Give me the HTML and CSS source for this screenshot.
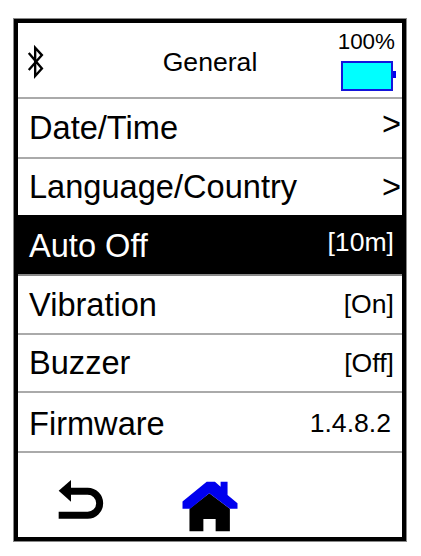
FILE: index.html
```html
<!DOCTYPE html>
<html lang="en">
<head>
    <meta charset="UTF-8">
    <meta name="viewport" content="width=device-width, initial-scale=1.0">
    <title>General</title>
    <link rel="stylesheet" href="styles.css">
</head>
<body>

    <div class="screen">
        <div class="status-bar">
            <svg class="bt-icon" viewBox="80 135 56 104" width="19" height="35">
                <path d="M88 162 L127 208 L107 230 L107 146 L127 168 L88 212" fill="none" stroke="#000" stroke-width="7"/>
            </svg>
            <div class="status-title">General</div>
            <div class="battery">
                <span class="battery-text">100%</span>
                <div class="battery-icon"><div class="battery-fill"></div></div>
            </div>
        </div>

        <div class="menu-row row-tall"><span>Date/Time</span><span class="chevron chevron-raised">&gt;</span></div>
        <div class="menu-row row-short before-selected"><span>Language/Country</span><span class="chevron">&gt;</span></div>
        <div class="menu-row selected"><span>Auto Off</span><span class="value value-raised">[10m]</span></div>
        <div class="menu-row"><span>Vibration</span><span class="value">[On]</span></div>
        <div class="menu-row row-short"><span>Buzzer</span><span class="value">[Off]</span></div>
        <div class="menu-row row-tall row-last"><span>Firmware</span><span class="value version">1.4.8.2</span></div>

        <div class="toolbar">
            <svg class="back-icon" viewBox="170 120 144 123" width="48" height="41">
                <path d="M212 123 L175 155 L212 188 Z" fill="#000"/>
                <path d="M200 157 H262 A36 36 0 0 1 262 229 H175" fill="none" stroke="#000" stroke-width="21"/>
            </svg>
            <svg class="home-icon" viewBox="540 120 180 160" width="60" height="53">
                <path d="M568 207 L628 160 L690 207 V275 H647 V238 H610 V275 H568 Z" fill="#000"/>
                <path d="M547 207 V185 L620 125 H645 L662 140 V125 H683 V165 L713 190 V207 H690 L628 160 L570 207 Z" fill="#0000ee"/>
            </svg>
        </div>
    </div>

</body>
</html>
```

FILE: styles.css
```css
body {
    margin: 0;
    background-color: white;
    color: black;
    font-family: "Liberation Sans", Arial, sans-serif;
}
.screen {
    width: 384px;
    height: 514px;
    margin: 18px 0 0 13px;
    border: 5px solid black;
    outline: 1px solid #888;
    outline-offset: -1px;
    display: flex;
    flex-direction: column;
}
.status-bar {
    height: 76px;
    flex: none;
    display: grid;
    grid-template-columns: 1fr auto 1fr;
    align-items: center;
    border-bottom: 2px solid #aaa;
    box-sizing: border-box;
}
.bt-icon {
    margin: 3px 0 0 8px;
}
.status-title {
    font-size: 26.6px;
    margin-top: 4px;
}
.battery {
    display: flex;
    flex-direction: column;
    align-items: flex-end;
    padding-right: 6px;
}
.battery-text {
    font-size: 22.4px;
    line-height: 26px;
    margin: -1px 1px 1px 0;
}
.battery-icon {
    width: 52px;
    height: 30px;
    margin: 5px 3px 0 0;
    position: relative;
    box-sizing: border-box;
    border: 2px solid #1414dc;
}
.battery-icon::after {
    content: "";
    position: absolute;
    right: -5px;
    top: 8px;
    width: 3px;
    height: 7px;
    background-color: #0000ee;
}
.battery-fill {
    height: 100%;
    background-color: #00ffff;
}
.menu-row {
    height: 59px;
    flex: none;
    display: flex;
    justify-content: space-between;
    align-items: center;
    padding: 0 8px 0 11px;
    border-bottom: 2px solid #aaa;
    box-sizing: border-box;
    font-size: 32.6px;
}
.row-tall {
    height: 60px;
}
.row-short {
    height: 58px;
}
.row-last {
    padding-top: 3px;
}
.before-selected {
    border-bottom-color: black;
}
.selected {
    background-color: black;
    color: white;
    border-bottom-color: #888;
}
.value {
    font-size: 26.6px;
}
.value-raised {
    margin-top: -6px;
}
.version {
    margin-right: 3px;
}
.chevron {
    margin-right: -7px;
}
.chevron-raised {
    margin-top: -8px;
}
.toolbar {
    flex: 1;
    display: flex;
    align-items: flex-end;
    padding: 0 0 4px 39px;
    gap: 75px;
}
.back-icon {
    margin-bottom: 13px;
}
```
